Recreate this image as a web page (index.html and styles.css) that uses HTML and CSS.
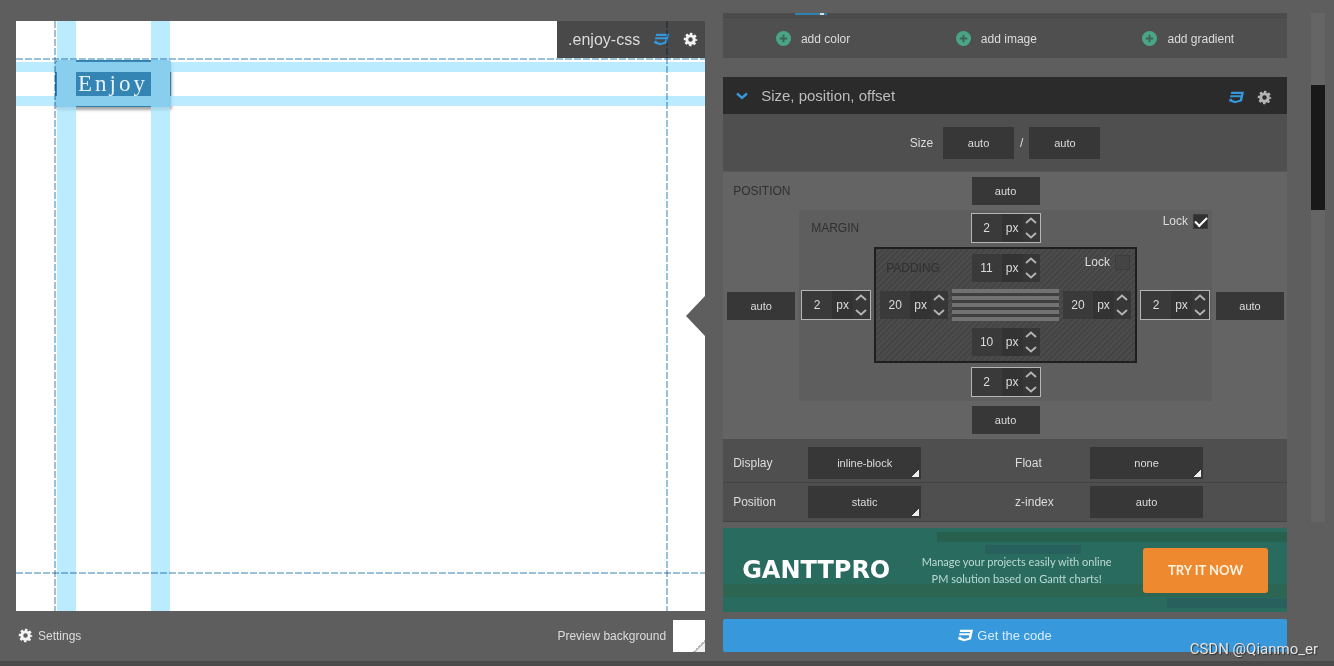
FILE: index.html
```html
<!DOCTYPE html>
<html lang="en">
<head>
<meta charset="utf-8">
<title>Enjoy CSS</title>
<link rel="stylesheet" href="styles.css">
</head>
<body>
<svg class="defs" aria-hidden="true">
  <symbol id="css3" viewBox="0 -40 480 592" preserveAspectRatio="none"><path d="M480 32l-64 368-223.300 80L0 400l19.600-94.800h82l-8 40.600L210 390.200l134.100-44.400 18.800-97.100H29.500l16-82h333.700l10.500-52.700H56.300l16.300-82z"/></symbol>
  <symbol id="gear" viewBox="0 0 16 16"><g fill="none" stroke="currentColor"><circle cx="8" cy="8" r="4" stroke-width="3.200"/><circle cx="8" cy="8" r="6" stroke-width="2.400" stroke-dasharray="2.600 2.112" stroke-dashoffset="1.300"/></g></symbol>
  <symbol id="plus" viewBox="0 0 16 16"><circle cx="8" cy="8" r="8" fill="#4aa586"/><path d="M8 4v8M4 8h8" stroke="#3f6458" stroke-width="2"/></symbol>
  <symbol id="up" viewBox="0 0 12 7"><path d="M1 6l5-4.500L11 6" fill="none" stroke="currentColor" stroke-width="1.800"/></symbol>
  <symbol id="down" viewBox="0 0 12 7"><path d="M1 1l5 4.500L11 1" fill="none" stroke="currentColor" stroke-width="1.800"/></symbol>
</svg>

<main class="app">
  <section class="preview">
    <div class="canvas">
      <button class="sample" type="button">Enjoy</button>
      <div class="bands">
        <i class="band band-left"></i><i class="band band-right"></i>
        <i class="band band-top"></i><i class="band band-bottom"></i>
      </div>
      <div class="tag">
        <span>.enjoy-css</span>
        <button type="button" aria-label="CSS" class="icon-btn blue"><svg class="icon"><use href="#css3"/></svg></button>
        <button type="button" aria-label="Options" class="icon-btn"><svg class="icon"><use href="#gear"/></svg></button>
      </div>
      <i class="dash dash-h dash-top"></i><i class="dash dash-h dash-bottom"></i>
      <i class="dash dash-v dash-left"></i><i class="dash dash-v dash-right"></i>
      <i class="pointer"></i>
    </div>
    <footer class="preview-foot">
      <button type="button" class="settings"><svg class="icon"><use href="#gear"/></svg>Settings</button>
      <span class="bg-label">Preview background</span>
      <button type="button" class="swatch" aria-label="Preview background"></button>
    </footer>
  </section>

  <section class="props">
    <div class="layers"><i class="layer-thumb"></i></div>
    <div class="add-row">
      <button type="button" class="add"><svg class="icon"><use href="#plus"/></svg>add color</button>
      <button type="button" class="add"><svg class="icon"><use href="#plus"/></svg>add image</button>
      <button type="button" class="add"><svg class="icon"><use href="#plus"/></svg>add gradient</button>
    </div>

    <header class="section-head">
      <svg class="chevron" viewBox="0 0 12 8"><path d="M1 1.500l5 4.500 5-4.500" fill="none" stroke="currentColor" stroke-width="2.400"/></svg>
      <h2>Size, position, offset</h2>
      <button type="button" aria-label="CSS" class="icon-btn blue"><svg class="icon"><use href="#css3"/></svg></button>
      <button type="button" aria-label="Options" class="icon-btn dim"><svg class="icon"><use href="#gear"/></svg></button>
    </header>

    <div class="size-row">
      <label for="w">Size</label>
      <input id="w" class="field" value="auto">
      <span class="slash">/</span>
      <input class="field" aria-label="Height" value="auto">
    </div>

    <div class="box position">
      <span class="name">POSITION</span>
      <input class="field top" aria-label="Top" value="auto">
      <input class="field left" aria-label="Left" value="auto">
      <div class="box margin">
        <span class="name">MARGIN</span>
        <label class="lock">Lock<input type="checkbox" checked></label>
        <div class="spin top"><input aria-label="Margin top" value="2"><button type="button" class="unit">px</button><span class="arrows"><button type="button" aria-label="More"><svg><use href="#up"/></svg></button><button type="button" aria-label="Less"><svg><use href="#down"/></svg></button></span></div>
        <div class="spin left"><input aria-label="Margin left" value="2"><button type="button" class="unit">px</button><span class="arrows"><button type="button" aria-label="More"><svg><use href="#up"/></svg></button><button type="button" aria-label="Less"><svg><use href="#down"/></svg></button></span></div>
        <div class="box padding">
          <span class="name">PADDING</span>
          <label class="lock">Lock<input type="checkbox"></label>
          <div class="spin top"><input aria-label="Padding top" value="11"><button type="button" class="unit">px</button><span class="arrows"><button type="button" aria-label="More"><svg><use href="#up"/></svg></button><button type="button" aria-label="Less"><svg><use href="#down"/></svg></button></span></div>
          <div class="spin left"><input aria-label="Padding left" value="20"><button type="button" class="unit">px</button><span class="arrows"><button type="button" aria-label="More"><svg><use href="#up"/></svg></button><button type="button" aria-label="Less"><svg><use href="#down"/></svg></button></span></div>
          <div class="content-lines"></div>
          <div class="spin right"><input aria-label="Padding right" value="20"><button type="button" class="unit">px</button><span class="arrows"><button type="button" aria-label="More"><svg><use href="#up"/></svg></button><button type="button" aria-label="Less"><svg><use href="#down"/></svg></button></span></div>
          <div class="spin bottom"><input aria-label="Padding bottom" value="10"><button type="button" class="unit">px</button><span class="arrows"><button type="button" aria-label="More"><svg><use href="#up"/></svg></button><button type="button" aria-label="Less"><svg><use href="#down"/></svg></button></span></div>
        </div>
        <div class="spin right"><input aria-label="Margin right" value="2"><button type="button" class="unit">px</button><span class="arrows"><button type="button" aria-label="More"><svg><use href="#up"/></svg></button><button type="button" aria-label="Less"><svg><use href="#down"/></svg></button></span></div>
        <div class="spin bottom"><input aria-label="Margin bottom" value="2"><button type="button" class="unit">px</button><span class="arrows"><button type="button" aria-label="More"><svg><use href="#up"/></svg></button><button type="button" aria-label="Less"><svg><use href="#down"/></svg></button></span></div>
      </div>
      <input class="field right" aria-label="Right" value="auto">
      <input class="field bottom" aria-label="Bottom" value="auto">
    </div>

    <div class="pair first">
      <div class="opt"><label for="display">Display</label><select id="display" class="field"><option>inline-block</option></select></div>
      <div class="opt"><label for="float">Float</label><select id="float" class="field"><option>none</option></select></div>
    </div>
    <div class="pair">
      <div class="opt"><label for="pos">Position</label><select id="pos" class="field"><option>static</option></select></div>
      <div class="opt"><label for="z">z-index</label><input id="z" class="field" value="auto"></div>
    </div>
  </section>

  <div class="scroll"><div class="thumb"></div></div>

  <aside class="ad">
    <strong class="brand">GANTTPRO</strong>
    <p>Manage your projects easily with online<br>PM solution based on Gantt charts!</p>
    <a class="cta" href="#">TRY IT NOW</a>
  </aside>

  <button type="button" class="get-code"><svg class="icon"><use href="#css3"/></svg>Get the code</button>
</main>
<div class="strip"></div>
<div class="watermark">CSDN @Qianmo_er</div>
</body>
</html>
```
FILE: styles.css
```css
* { box-sizing: border-box; }
body {
  margin: 0;
  height: 100vh;
  display: flex;
  flex-direction: column;
  overflow: hidden;
  background: #5e5e5e;
  color: #dcdcdc;
  font: 12px/16px "Liberation Sans", Arial, sans-serif;
}
button, input, select { font: inherit; color: inherit; margin: 0; padding: 0; border: 0; border-radius: 0; background: none; }
svg { display: block; }
.defs { position: absolute; width: 0; height: 0; }
.icon { width: 15px; height: 15px; fill: currentColor; flex: none; }
.icon-btn { color: #f4f4f4; }
.icon-btn.blue { color: #3498db; }
.icon-btn.dim { color: #b4b4b4; }

.app {
  flex: 1;
  min-height: 0;
  display: grid;
  grid-template-columns: minmax(0, 11fr) minmax(0, 9fr) 20px;
  grid-template-rows: minmax(0, 1fr) auto auto;
  column-gap: 18px;
  padding: 13px 9px 9px 16px;
}
.strip { height: 5px; background: #4b4a4b; }

/* Preview */
.preview { grid-row: 1 / 4; display: flex; flex-direction: column; padding-top: 8px; }
.canvas { position: relative; flex: 1; background: #fff; }
.sample {
  position: absolute;
  left: 39px;
  top: 39px;
  width: 116px;
  height: 47px;
  border: 1px solid #3080b0;
  border-radius: 3px;
  background: #3485b4;
  box-shadow: 1px 3px 3px rgba(0, 0, 0, .35);
  color: #e6f2fa;
  font: 23px/28px "Liberation Serif", serif;
  letter-spacing: 3px;
}
.bands { position: absolute; inset: 0; opacity: .76; }
.band { position: absolute; background: #a5e5ff; }
.band-left, .band-right { top: 0; bottom: 0; width: 19px; }
.band-left { left: 41px; }
.band-right { left: 135px; }
.band-top, .band-bottom { left: 0; right: 0; height: 10px; }
.band-top { top: 41px; }
.band-bottom { top: 75px; }
.dash { position: absolute; mix-blend-mode: multiply; }
.dash-h { left: 0; right: 0; height: 2px; background: repeating-linear-gradient(90deg, #9dc0da 0 7px, transparent 7px 9px); }
.dash-v { top: 0; bottom: 0; width: 2px; background: repeating-linear-gradient(#9dc0da 0 7px, transparent 7px 9px); }
.dash-top { top: 37px; }
.dash-bottom { bottom: 37px; }
.dash-left { left: 38px; }
.dash-right { right: 37px; }
.tag {
  position: absolute;
  top: 0;
  right: 0;
  height: 37px;
  display: flex;
  align-items: center;
  gap: 14px;
  padding: 0 7px 0 11px;
  background: #494949;
  font-size: 16px;
}
.pointer {
  position: absolute;
  right: 0;
  top: 50%;
  margin-top: -20px;
  border: 20px solid transparent;
  border-left: 0;
  border-right: 19px solid #5e5e5e;
}
.preview-foot { display: flex; align-items: center; height: 33px; margin-top: 8px; }
.settings { display: flex; align-items: center; gap: 5px; margin-left: 2px; }
.settings .icon { color: #f4f4f4; }
.bg-label { margin-left: auto; margin-right: 7px; }
.swatch { width: 32px; height: 32px; background: linear-gradient(135deg, transparent 50%, #b8b8b8 50% 60%, #eee 60%) right bottom / 12px 12px no-repeat #fff; }

/* Properties */
.props { overflow: hidden; }
.layers { height: 5px; background: #4c4c4c; border-bottom: 1px solid #474747; padding-left: 72px; }
.layer-thumb { display: block; width: 32px; height: 2px; background: linear-gradient(90deg, transparent 25px, #ddd 25px 29px, transparent 29px) #2f81b0; }
.add-row { display: flex; justify-content: space-around; align-items: center; height: 40px; margin-bottom: 19px; padding-top: 1px; background: #4f4f4f; }
.add { display: flex; align-items: center; gap: 10px; }
.section-head { display: flex; align-items: center; gap: 13px; height: 37px; padding: 0 15px 0 13px; background: #2b2b2b; }
.section-head h2 { flex: 1; margin: 0; font-size: 15px; font-weight: 400; color: #bdbdbd; }
.section-head .icon-btn { padding-top: 3px; }
.chevron { width: 12px; height: 8px; color: #3498db; }
.size-row { display: flex; align-items: center; justify-content: center; gap: 6px; height: 57px; background: #4f4f4f; }
.size-row label { margin-right: 4px; }
.size-row .field { width: 71px; height: 32px; }
.field { appearance: none; background-color: #373737; font-size: 11px; text-align: center; text-align-last: center; }

.box { display: grid; grid-template-columns: auto minmax(0, 1fr) auto; justify-items: center; align-items: center; }
.box .top { grid-area: 1 / 2; }
.box .left { grid-area: 2 / 1; }
.box .right { grid-area: 2 / 3; }
.box .bottom { grid-area: 3 / 2; }
.name { grid-area: 1 / 1 / 2 / 3; justify-self: start; color: #303030; }
.lock { grid-area: 1 / 2 / 2 / 4; justify-self: end; align-self: start; display: flex; align-items: center; gap: 5px; }
.lock input { appearance: none; width: 15px; height: 15px; background: #444; border: 1px solid #3c3c3c; display: grid; place-items: center; }
.lock input:checked { background: #303030; }
.lock input:checked::after { content: ""; width: 10px; height: 5px; border: solid #fff; border-width: 0 0 2px 2px; transform: translateY(-1px) rotate(-45deg); }

.position { padding: 5px 3px 5px 4px; gap: 5px 4px; background: #646464; border-top: 1px solid #585858; }
.position > .field { width: 68px; height: 28px; }
.position > .name { padding-left: 6px; }
.margin { grid-area: 2 / 2; justify-self: stretch; padding: 3px 2px 4px; gap: 4px 3px; background: #5e5e5e; }
.margin > .name { padding-left: 10px; }
.margin > .spin { border: 1px solid #b5b5b5; width: 70px; height: 30px; }
.margin > .lock { padding-right: 2px; }
.padding {
  grid-area: 2 / 2;
  justify-self: stretch;
  padding: 5px 4px;
  gap: 7px 4px;
  border: 2px solid #1f1f1f;
  background: repeating-linear-gradient(135deg, #444 0 2px, #4c4c4c 2px 4px);
}
.padding > .name { padding-left: 6px; }
.padding > .lock { padding-right: 1px; }
.content-lines { grid-area: 2 / 2; justify-self: stretch; height: 32px; background: repeating-linear-gradient(#727272 0 4px, #3f3f3f 4px 7px); }

.spin { display: flex; width: 68px; height: 28px; background: #373737; }
.spin input { width: 30px; min-width: 0; text-align: center; background: #3a3a3a; }
.unit { flex: 1; background: #333; }
.arrows { width: 17px; display: flex; flex-direction: column; justify-content: space-between; padding: 3px 2px; color: #b5b5b5; }
.arrows svg { width: 12px; height: 7px; }

.pair { display: grid; grid-template-columns: 1fr 1fr; padding: 3px 0; background: #4f4f4f; border-bottom: 1px solid #434343; }
.pair.first { padding-top: 8px; }
.opt { display: flex; align-items: center; padding-left: 10px; }
.opt label { width: 75px; }
.opt .field { width: 113px; height: 32px; }
.opt select { background-image: linear-gradient(135deg, transparent 50%, #eee 50%); background-size: 7px 7px; background-position: right 2px bottom 2px; background-repeat: no-repeat; }

.scroll { margin-left: 6px; background: #656565; padding-top: 72px; }
.thumb { height: 125px; background: #191919; }

/* Advert */
.ad {
  grid-column: 2;
  display: flex;
  align-items: center;
  justify-content: space-between;
  height: 84px;
  margin-top: 6px;
  padding: 0 19px;
  background:
    linear-gradient(#28604f, #28604f) 100% 4px / 350px 10px no-repeat,
    linear-gradient(#27605c, #27605c) 262px 17px / 96px 9px no-repeat,
    linear-gradient(#27605c, #27605c) 100% 70px / 120px 10px no-repeat,
    linear-gradient(#2c6653, #2c6653) 0 56px / 100% 13px no-repeat,
    #2a6b60;
  color: #bcdad4;
  font-family: Lato, sans-serif;
}
.brand { color: #fff; font: bold 24px/28px "DejaVu Sans", sans-serif; }
.ad p { margin: 0; text-align: center; font-size: 11px; line-height: 17px; }
.cta { width: 125px; line-height: 45px; text-align: center; border-radius: 3px; background: #ef892f; color: #fff3e2; font-size: 13px; font-weight: 700; text-decoration: none; }
.get-code { grid-column: 2; display: flex; align-items: center; justify-content: center; gap: 4px; height: 33px; margin-top: 7px; border-radius: 2px; background: #3799dc; color: #d7ecfa; font-size: 13px; }
.get-code .icon { color: #fff; }
.watermark { position: absolute; right: 16px; bottom: 7px; font: 15px/20px Roboto, sans-serif; color: #e4e4e4; text-shadow: 1px 1px 1px #333; }
```
